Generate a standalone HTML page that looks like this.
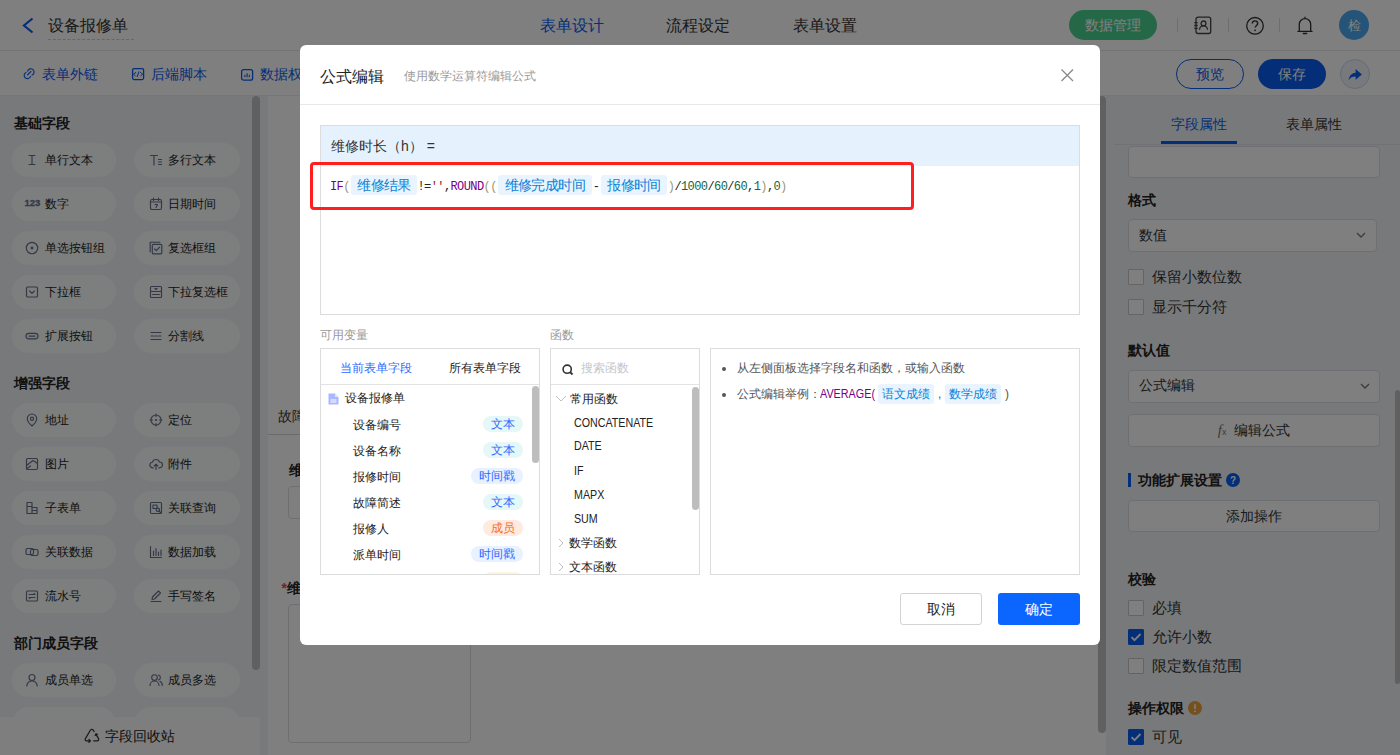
<!DOCTYPE html>
<html><head><meta charset="utf-8">
<style>
*{box-sizing:border-box;margin:0;padding:0}
html,body{width:1400px;height:755px;overflow:hidden;background:#fff}
body{position:relative;font-family:"Liberation Sans",sans-serif;color:#333;font-size:14px}
.a{position:absolute;white-space:nowrap}
.t{position:absolute;white-space:nowrap;line-height:20px}
svg{position:absolute;overflow:visible}
/* header */
#hdr{position:absolute;left:0;top:0;width:1400px;height:51px;background:#fff;border-bottom:1px solid #e6e6e6}
#tb{position:absolute;left:0;top:51px;width:1400px;height:45px;background:#fff;border-bottom:1px solid #ececec}
#left{position:absolute;left:0;top:96px;width:268px;height:659px;background:#f1f3f6}
#center{position:absolute;left:268px;top:96px;width:838px;height:659px;background:#fff}
#right{position:absolute;left:1106px;top:96px;width:294px;height:659px;background:#f1f3f6}
.pill{position:absolute;width:104px;height:34px;border-radius:17px;background:#fbfcfd}
.pill2{left:134px;width:106px}
.ptxt{position:absolute;font-size:12px;line-height:34px;color:#1c1c1c;white-space:nowrap}
.sec{position:absolute;left:14px;font-size:14px;font-weight:bold;line-height:20px;color:#222}
.lbl{position:absolute;font-size:14px;font-weight:bold;line-height:20px;color:#222;left:28px}
.box{position:absolute;border:1px solid #dcdfe6;border-radius:4px;background:#fff}
.cb{position:absolute;left:28px;width:16px;height:16px;border:1px solid #c8c8c8;background:#fff;border-radius:1px}
.cb.on{background:#0a5cf0;border-color:#0a5cf0}
.cbt{position:absolute;left:52px;font-size:14.5px;line-height:20px;color:#333}
#mask{position:absolute;left:0;top:0;width:1400px;height:755px;background:rgba(0,0,0,.5)}
#modal{position:absolute;left:300px;top:45px;width:800px;height:600px;background:#fff;border-radius:6px;overflow:hidden}
.tag{height:20px;top:0;border-radius:3px;background:#e9f4fe;color:#0a82d8;font-family:"Liberation Sans",sans-serif;font-size:14px;line-height:20px;text-align:center}
.vt{position:absolute;height:16px;border-radius:8px;font-size:12px;line-height:16px;text-align:center}
.fn{left:22.5px;font-size:12px;line-height:17px;color:#222;transform:scaleX(.89);transform-origin:0 0}
.tag2{position:absolute;height:20px;border-radius:3px;background:#e9f4fe;color:#0a82d8;font-size:12px;line-height:20px;text-align:center}
</style></head><body>

<div id="hdr">
  <svg width="12" height="16" style="left:22px;top:17px"><polyline points="10.5,1.5 2,8.5 10.5,15.5" fill="none" stroke="#0a5cf0" stroke-width="2.2"/></svg>
  <div class="t" style="left:48px;top:15px;font-size:16px;line-height:21px;color:#333">设备报修单</div>
  <div class="a" style="left:48px;top:39px;width:86px;border-top:1px dashed #cfcfcf"></div>
  <div class="t" style="left:540px;top:15px;font-size:16px;line-height:21px;color:#0a5cf0">表单设计</div>
  <div class="t" style="left:666px;top:15px;font-size:16px;line-height:21px;color:#333">流程设定</div>
  <div class="t" style="left:793px;top:15px;font-size:16px;line-height:21px;color:#333">表单设置</div>
  <div class="a" style="left:1069px;top:10px;width:88px;height:30px;border-radius:15px;background:#4bd090;color:#fff;font-size:14px;line-height:30px;text-align:center">数据管理</div>
  <div class="a" style="left:1177px;top:18px;width:1px;height:14px;background:#ddd"></div>
  <div class="a" style="left:1228px;top:18px;width:1px;height:14px;background:#ddd"></div>
  <div class="a" style="left:1279px;top:18px;width:1px;height:14px;background:#ddd"></div>
  <svg width="18" height="18" style="left:1193px;top:16px"><rect x="3" y="1.2" width="14.7" height="16.3" rx="2" stroke="#444" stroke-width="1.3" fill="none"/><path d="M1.3 6.6h3.4M1.3 9.5h3.4M1.3 12.4h3.4" stroke="#444" stroke-width="1.3"/><circle cx="10.5" cy="7.4" r="2.4" stroke="#444" stroke-width="1.3" fill="none"/><path d="M6.5 13.8a4 4 0 018 0" stroke="#444" stroke-width="1.3" fill="none"/></svg>
  <svg width="20" height="20" style="left:1245px;top:15.5px"><circle cx="10" cy="9.8" r="8.3" stroke="#333" stroke-width="1.3" fill="none"/><path d="M7.3 7.6a2.7 2.7 0 115.4 0c0 1.7-2.3 1.9-2.5 3.9" stroke="#333" stroke-width="1.4" fill="none"/><circle cx="10.1" cy="14.3" r="0.9" fill="#333"/></svg>
  <svg width="18" height="20" style="left:1296px;top:15px"><path d="M9 2.2v1.3M3.3 16.4V9.3a5.7 5.7 0 0111.4 0v7.1M2 16.4h14M7.3 18.5h3.4" stroke="#333" stroke-width="1.3" fill="none" stroke-linecap="round"/></svg>
  <div class="a" style="left:1339px;top:10px;width:30px;height:30px;border-radius:15px;background:#4aa8f0;color:#fff;font-size:13px;line-height:31px;text-align:center">检</div>
</div>

<div id="tb">
  <svg width="14" height="14" style="left:22px;top:15px"><path d="M5.6 5.1A3.3 3.3 0 1 1 10.1 9.1M8.6 10.4A3.3 3.3 0 1 1 4 6.4M5.5 8.9L8.9 5.5" stroke="#0a5cf0" stroke-width="1.15" fill="none" stroke-linecap="round"/></svg>
  <svg width="14" height="14" style="left:131px;top:16px"><rect x="1.6" y="1.6" width="11" height="11" rx="1.5" stroke="#0a5cf0" stroke-width="1.3" fill="none"/><path d="M5 5.2L2.6 7.2 4.6 9M9.2 5.2l2.4 2-2 1.8M8.1 4.4L6 10" stroke="#0a5cf0" stroke-width="1" fill="none"/></svg>
  <svg width="14" height="14" style="left:240px;top:17px"><rect x="1.6" y="1.6" width="11" height="10.6" rx="2" stroke="#0a5cf0" stroke-width="1.3" fill="none"/><path d="M4.9 6.8v2.5M7.1 5.3v4M9.3 6.8v2.5" stroke="#0a5cf0" stroke-width="1.1" fill="none"/></svg>
  <div class="t" style="left:42px;top:13px;font-size:14px;color:#0a5cf0">表单外链</div>
  <div class="t" style="left:151px;top:13px;font-size:14px;color:#0a5cf0">后端脚本</div>
  <div class="t" style="left:260px;top:13px;font-size:14px;color:#0a5cf0">数据权限</div>
  <div class="a" style="left:1176px;top:8px;width:68px;height:30px;border-radius:15px;border:1px solid #0a5cf0;color:#0a5cf0;font-size:14px;line-height:28px;text-align:center">预览</div>
  <div class="a" style="left:1258px;top:8px;width:68px;height:30px;border-radius:15px;background:#0a5cf0;color:#fff;font-size:14px;line-height:30px;text-align:center">保存</div>
  <div class="a" style="left:1340px;top:8px;width:30px;height:30px;border-radius:15px;background:#eef3fb;border:1px solid #c9d6ee"><svg width="16" height="14" style="left:7px;top:8px"><path d="M0.6 12.5C1.2 7.4 4.2 5 7.6 4.8V1l6.3 5.4-6.3 5.3V8.6c-3.2 0-5.3.9-7 3.9z" fill="#0a5cf0"/></svg></div>
</div>

<div id="left">
<div class="sec" style="top:16.6px">基础字段</div>
<div class="sec" style="top:276.8px">增强字段</div>
<div class="sec" style="top:537.0px">部门成员字段</div>
<div class="pill" style="left:12px;top:47px"></div><svg width="14" height="14" style="left:25px;top:57px"><path d="M4 2.5h6M7 2.5v9M4 11.5h6" stroke="#66708a" stroke-width="1.15" fill="none" stroke-linecap="round" stroke-linejoin="round"/></svg><div class="ptxt" style="left:45px;top:47px">单行文本</div>
<div class="pill pill2" style="top:47px"></div><svg width="14" height="14" style="left:149px;top:57px"><path d="M1.5 2.5h7M5 2.5v9.5M9.5 6.5h3M9.5 9h3M9.5 11.5h3" stroke="#66708a" stroke-width="1.15" fill="none" stroke-linecap="round" stroke-linejoin="round"/></svg><div class="ptxt" style="left:168px;top:47px">多行文本</div>
<div class="pill" style="left:12px;top:91px"></div><div class="a" style="left:24.5px;top:102.4px;font-size:9.5px;line-height:10px;font-weight:bold;color:#6a7390;-webkit-text-stroke:.3px #6a7390">123</div><div class="ptxt" style="left:45px;top:91px">数字</div>
<div class="pill pill2" style="top:91px"></div><svg width="14" height="14" style="left:149px;top:101px"><rect x="1.5" y="2.5" width="11" height="10" rx="1.5" stroke="#66708a" stroke-width="1.15" fill="none" stroke-linecap="round" stroke-linejoin="round"/><path d="M4.5 1v2.5M9.5 1v2.5M1.5 5h11M6 7.5h2.5l-1.5 3" stroke="#66708a" stroke-width="1.15" fill="none" stroke-linecap="round" stroke-linejoin="round"/></svg><div class="ptxt" style="left:168px;top:91px">日期时间</div>
<div class="pill" style="left:12px;top:135px"></div><svg width="14" height="14" style="left:25px;top:145px"><circle cx="7" cy="7" r="5.7" stroke="#66708a" stroke-width="1.15" fill="none" stroke-linecap="round" stroke-linejoin="round"/><circle cx="7" cy="7" r="1.4" fill="#66708a"/></svg><div class="ptxt" style="left:45px;top:135px">单选按钮组</div>
<div class="pill pill2" style="top:135px"></div><svg width="14" height="14" style="left:149px;top:145px"><path d="M1.2 10.8V1.2h9.6" stroke="#66708a" stroke-width="1.15" fill="none" stroke-linecap="round" stroke-linejoin="round"/><rect x="3.3" y="3.3" width="9.5" height="9.5" rx="1" stroke="#66708a" stroke-width="1.15" fill="none" stroke-linecap="round" stroke-linejoin="round"/><path d="M5.6 8l1.7 1.7 3.3-3.5" stroke="#66708a" stroke-width="1.15" fill="none" stroke-linecap="round" stroke-linejoin="round"/></svg><div class="ptxt" style="left:168px;top:135px">复选框组</div>
<div class="pill" style="left:12px;top:179px"></div><svg width="14" height="14" style="left:25px;top:189px"><rect x="1.5" y="2" width="11" height="10" rx="1" stroke="#66708a" stroke-width="1.15" fill="none" stroke-linecap="round" stroke-linejoin="round"/><path d="M4.6 6l2.4 2.3 2.4-2.3" stroke="#66708a" stroke-width="1.15" fill="none" stroke-linecap="round" stroke-linejoin="round"/></svg><div class="ptxt" style="left:45px;top:179px">下拉框</div>
<div class="pill pill2" style="top:179px"></div><svg width="14" height="14" style="left:149px;top:189px"><rect x="1.5" y="1.5" width="11" height="5" rx="1" stroke="#66708a" stroke-width="1.15" fill="none" stroke-linecap="round" stroke-linejoin="round"/><path d="M1.5 6.5v5a1 1 0 001 1h9a1 1 0 001-1v-5M6 3.5l1 1 1-1M3.5 9.5h7" stroke="#66708a" stroke-width="1.15" fill="none" stroke-linecap="round" stroke-linejoin="round"/></svg><div class="ptxt" style="left:168px;top:179px">下拉复选框</div>
<div class="pill" style="left:12px;top:223px"></div><svg width="14" height="14" style="left:25px;top:233px"><rect x="1" y="4.3" width="12" height="5.6" rx="2.8" stroke="#66708a" stroke-width="1.15" fill="none" stroke-linecap="round" stroke-linejoin="round"/><path d="M4 7.1h6" stroke="#66708a" stroke-width="1.15" fill="none" stroke-linecap="round" stroke-linejoin="round"/></svg><div class="ptxt" style="left:45px;top:223px">扩展按钮</div>
<div class="pill pill2" style="top:223px"></div><svg width="14" height="14" style="left:149px;top:233px"><path d="M2 3.5h10M2 7h2.5M5.8 7h2.4M9.5 7H12M2 10.5h10" stroke="#66708a" stroke-width="1.15" fill="none" stroke-linecap="round" stroke-linejoin="round"/></svg><div class="ptxt" style="left:168px;top:223px">分割线</div>
<div class="pill" style="left:12px;top:307px"></div><svg width="14" height="14" style="left:25px;top:317px"><path d="M7 13S2.3 8.8 2.3 5.7a4.7 4.7 0 019.4 0C11.7 8.8 7 13 7 13z" stroke="#66708a" stroke-width="1.15" fill="none" stroke-linecap="round" stroke-linejoin="round"/><circle cx="7" cy="5.7" r="1.6" stroke="#66708a" stroke-width="1.15" fill="none" stroke-linecap="round" stroke-linejoin="round"/></svg><div class="ptxt" style="left:45px;top:307px">地址</div>
<div class="pill pill2" style="top:307px"></div><svg width="14" height="14" style="left:149px;top:317px"><circle cx="7" cy="7" r="5" stroke="#66708a" stroke-width="1.15" fill="none" stroke-linecap="round" stroke-linejoin="round"/><path d="M7 1v2.5M7 10.5V13M1 7h2.5M10.5 7H13" stroke="#66708a" stroke-width="1.15" fill="none" stroke-linecap="round" stroke-linejoin="round"/><circle cx="7" cy="7" r="1.1" fill="#66708a"/></svg><div class="ptxt" style="left:168px;top:307px">定位</div>
<div class="pill" style="left:12px;top:351px"></div><svg width="14" height="14" style="left:25px;top:361px"><rect x="1.5" y="1.5" width="11" height="11" rx="1.2" stroke="#66708a" stroke-width="1.15" fill="none" stroke-linecap="round" stroke-linejoin="round"/><path d="M1.5 8.5L8 3.5l4.5 3M1.5 12l4-3" stroke="#66708a" stroke-width="1.15" fill="none" stroke-linecap="round" stroke-linejoin="round"/></svg><div class="ptxt" style="left:45px;top:351px">图片</div>
<div class="pill pill2" style="top:351px"></div><svg width="14" height="14" style="left:149px;top:361px"><path d="M4.2 10.8H3.8a2.8 2.8 0 01-.3-5.6A3.6 3.6 0 0110.4 5a2.9 2.9 0 01.3 5.8h-.9M7 7.2v5.3M5.2 9l1.8-1.8L8.8 9" stroke="#66708a" stroke-width="1.15" fill="none" stroke-linecap="round" stroke-linejoin="round"/></svg><div class="ptxt" style="left:168px;top:351px">附件</div>
<div class="pill" style="left:12px;top:395px"></div><svg width="14" height="14" style="left:25px;top:405px"><path d="M2 1.5h5v11H2zM7 6.5h5v6H7zM2 5.5h5M7 9.5h5" stroke="#66708a" stroke-width="1.15" fill="none" stroke-linecap="round" stroke-linejoin="round"/></svg><div class="ptxt" style="left:45px;top:395px">子表单</div>
<div class="pill pill2" style="top:395px"></div><svg width="14" height="14" style="left:149px;top:405px"><rect x="1.5" y="1.5" width="11" height="11" rx="1" stroke="#66708a" stroke-width="1.15" fill="none" stroke-linecap="round" stroke-linejoin="round"/><path d="M4 4h4v3.5H4z" stroke="#66708a" stroke-width="1.15" fill="none" stroke-linecap="round" stroke-linejoin="round"/><circle cx="8.8" cy="8.8" r="1.7" stroke="#66708a" stroke-width="1.15" fill="none" stroke-linecap="round" stroke-linejoin="round"/><path d="M10 10l1.5 1.5" stroke="#66708a" stroke-width="1.15" fill="none" stroke-linecap="round" stroke-linejoin="round"/></svg><div class="ptxt" style="left:168px;top:395px">关联查询</div>
<div class="pill" style="left:12px;top:439px"></div><svg width="14" height="14" style="left:25px;top:449px"><rect x="1" y="3.5" width="7.5" height="6" rx="1.5" stroke="#66708a" stroke-width="1.15" fill="none" stroke-linecap="round" stroke-linejoin="round"/><rect x="5.5" y="4.5" width="7.5" height="6" rx="1.5" stroke="#66708a" stroke-width="1.15" fill="none" stroke-linecap="round" stroke-linejoin="round"/></svg><div class="ptxt" style="left:45px;top:439px">关联数据</div>
<div class="pill pill2" style="top:439px"></div><svg width="14" height="14" style="left:149px;top:449px"><path d="M1.5 1.5v11h11M4.5 6v4.5M7 3.5v7M9.5 7v3.5M12 5v5.5" stroke="#66708a" stroke-width="1.15" fill="none" stroke-linecap="round" stroke-linejoin="round"/></svg><div class="ptxt" style="left:168px;top:439px">数据加载</div>
<div class="pill" style="left:12px;top:483px"></div><svg width="14" height="14" style="left:25px;top:493px"><rect x="1.5" y="2" width="11" height="10" rx="1" stroke="#66708a" stroke-width="1.15" fill="none" stroke-linecap="round" stroke-linejoin="round"/><path d="M4 5.5h6l-1-1M10 8.5H4l1 1" stroke="#66708a" stroke-width="1.15" fill="none" stroke-linecap="round" stroke-linejoin="round"/></svg><div class="ptxt" style="left:45px;top:483px">流水号</div>
<div class="pill pill2" style="top:483px"></div><svg width="14" height="14" style="left:149px;top:493px"><path d="M2 12.5h10M3 10.5l.5-2.5L9.5 2l2 2-6 6z" stroke="#66708a" stroke-width="1.15" fill="none" stroke-linecap="round" stroke-linejoin="round"/></svg><div class="ptxt" style="left:168px;top:483px">手写签名</div>
<div class="pill" style="left:12px;top:567px"></div><svg width="14" height="14" style="left:25px;top:577px"><circle cx="7" cy="4.5" r="3" stroke="#66708a" stroke-width="1.15" fill="none" stroke-linecap="round" stroke-linejoin="round"/><path d="M1.8 13a5.2 5.2 0 0110.4 0" stroke="#66708a" stroke-width="1.15" fill="none" stroke-linecap="round" stroke-linejoin="round"/></svg><div class="ptxt" style="left:45px;top:567px">成员单选</div>
<div class="pill pill2" style="top:567px"></div><svg width="14" height="14" style="left:149px;top:577px"><circle cx="5.5" cy="4.5" r="2.8" stroke="#66708a" stroke-width="1.15" fill="none" stroke-linecap="round" stroke-linejoin="round"/><path d="M1 12.5a4.5 4.5 0 019 0M9.5 2a2.6 2.6 0 010 5M11 8.2a4.2 4.2 0 012.2 4.3" stroke="#66708a" stroke-width="1.15" fill="none" stroke-linecap="round" stroke-linejoin="round"/></svg><div class="ptxt" style="left:168px;top:567px">成员多选</div>
<div class="pill" style="left:12px;top:611px"></div><svg width="14" height="14" style="left:25px;top:621px"><circle cx="7" cy="4.5" r="3" stroke="#66708a" stroke-width="1.15" fill="none" stroke-linecap="round" stroke-linejoin="round"/><path d="M1.8 13a5.2 5.2 0 0110.4 0" stroke="#66708a" stroke-width="1.15" fill="none" stroke-linecap="round" stroke-linejoin="round"/></svg><div class="ptxt" style="left:45px;top:611px">部门单选</div>
<div class="pill pill2" style="top:611px"></div><svg width="14" height="14" style="left:149px;top:621px"><circle cx="5.5" cy="4.5" r="2.8" stroke="#66708a" stroke-width="1.15" fill="none" stroke-linecap="round" stroke-linejoin="round"/><path d="M1 12.5a4.5 4.5 0 019 0M9.5 2a2.6 2.6 0 010 5M11 8.2a4.2 4.2 0 012.2 4.3" stroke="#66708a" stroke-width="1.15" fill="none" stroke-linecap="round" stroke-linejoin="round"/></svg><div class="ptxt" style="left:168px;top:611px">部门多选</div>
<div class="a" style="left:252px;top:0;width:8px;height:574px;border-radius:4px;background:#c1c1c1"></div>
<div class="a" style="left:0;top:621px;width:260px;height:38px;background:#fcfcfd"></div>
<svg width="16" height="15" style="left:84px;top:632px"><path d="M6.6 1.8L1.4 10.6c-.6 1.1 0 2.3 1.2 2.3H6M4.9 11.3L6.5 12.9 4.9 14.3M9.8 12.9h3.4c1.2 0 1.9-1.2 1.3-2.3l-2.6-4.5M13.3 6.4l-1.4-.6-.7 1.7M10.1 3.6L9.2 2c-.6-1-1.8-1-2.5 0" stroke="#333" stroke-width="1.2" fill="none" stroke-linecap="round" stroke-linejoin="round"/></svg>
<div class="t" style="left:105px;top:630px;font-size:14px;color:#222">字段回收站</div>
</div>
<div id="center">
<div class="t" style="left:10px;top:309.7px;font-size:14px;color:#333">故障简述</div>
<div class="a" style="left:0;top:338px;width:838px;height:1px;background:#d6d6d6"></div>
<div class="t" style="left:21px;top:364.4px;font-size:14px;font-weight:bold;color:#222">维修结果</div>
<div class="box" style="left:20px;top:390px;width:400px;height:33px"></div>
<div class="t" style="left:13.5px;top:481.5px;font-size:14px;font-weight:bold;color:#222"><span style="color:#f04040">*</span>维修完成时间</div>
<div class="box" style="left:20px;top:508px;width:183px;height:139px"></div>
</div>
<div id="right">
<div class="t" style="left:65px;top:18px;font-size:14px;color:#0a5cf0">字段属性</div>
<div class="t" style="left:180px;top:18px;font-size:14px;color:#333">表单属性</div>
<div class="a" style="left:8px;top:48px;width:286px;height:1px;background:#e3e5e8"></div>
<div class="a" style="left:55px;top:45px;width:76px;height:3px;background:#0a5cf0"></div>
<div class="box" style="left:22px;top:50px;width:252px;height:32px"></div>
<div class="a" style="left:8px;top:49px;width:286px;height:0"></div>
<div class="lbl" style="left:22px;top:93.6px">格式</div>
<div class="box" style="left:22px;top:122.6px;width:249px;height:33px"></div>
<div class="t" style="left:33px;top:129px;font-size:14px;color:#333">数值</div>
<svg width="10" height="6" style="left:250px;top:136px"><path d="M1 1l4 4 4-4" stroke="#777" stroke-width="1.3" fill="none"/></svg>
<div class="cb" style="left:22px;top:173px"></div><div class="cbt" style="left:46px;top:170.7px">保留小数位数</div>
<div class="cb" style="left:22px;top:203px"></div><div class="cbt" style="left:46px;top:200.8px">显示千分符</div>
<div class="lbl" style="left:22px;top:244px">默认值</div>
<div class="box" style="left:22px;top:273.5px;width:252px;height:33px"></div>
<div class="t" style="left:33px;top:279px;font-size:14px;color:#333">公式编辑</div>
<svg width="10" height="6" style="left:254px;top:287px"><path d="M1 1l4 4 4-4" stroke="#777" stroke-width="1.3" fill="none"/></svg>
<div class="box" style="left:22px;top:317.6px;width:252px;height:33px;text-align:center;font-size:14px;line-height:31px;color:#333"><i style="font-family:'Liberation Serif',serif;color:#777;font-size:15px">f</i><span style="font-size:9px;color:#777;font-family:'Liberation Sans'">x</span>&nbsp; 编辑公式</div>
<div class="a" style="left:22px;top:377px;width:3px;height:14px;background:#0a5cf0"></div>
<div class="lbl" style="left:31.6px;top:374px">功能扩展设置</div>
<svg width="14" height="14" style="left:120px;top:377px"><circle cx="7" cy="7" r="7" fill="#0a5cf0"/><text x="7" y="11" text-anchor="middle" font-family="Liberation Sans" font-weight="bold" font-size="10" fill="#fff">?</text></svg>
<div class="box" style="left:22px;top:403.7px;width:252px;height:32.5px;text-align:center;font-size:14px;line-height:30px;color:#333">添加操作</div>
<div class="lbl" style="left:22px;top:473px">校验</div>
<div class="cb" style="left:22px;top:503.8px"></div><div class="cbt" style="left:46px;top:501.8px">必填</div>
<div class="cb on" style="left:22px;top:532.9px"><svg width="16" height="16" style="left:-1px;top:-1px"><path d="M3.5 8.2l3 3 6-6.2" stroke="#fff" stroke-width="1.8" fill="none"/></svg></div><div class="cbt" style="left:46px;top:530.9px">允许小数</div>
<div class="cb" style="left:22px;top:561.9px"></div><div class="cbt" style="left:46px;top:559.9px">限定数值范围</div>
<div class="lbl" style="left:22px;top:602px">操作权限</div>
<svg width="14" height="14" style="left:82.4px;top:605px"><circle cx="7" cy="7" r="7" fill="#e8a33d"/><path d="M7 3.3v4.6" stroke="#fff" stroke-width="1.6"/><circle cx="7" cy="10.2" r="0.9" fill="#fff"/></svg>
<div class="cb on" style="left:22px;top:632.6px"><svg width="16" height="16" style="left:-1px;top:-1px"><path d="M3.5 8.2l3 3 6-6.2" stroke="#fff" stroke-width="1.8" fill="none"/></svg></div><div class="cbt" style="left:46px;top:630.6px">可见</div>
<div class="a" style="left:289px;top:294px;width:5px;height:294px;border-radius:3px;background:#c1c1c1"></div>
</div>
<div class="a" style="left:1098px;top:96px;width:8px;height:637px;border-radius:4px;background:#c1c1c1"></div>

<div id="mask"></div>

<div id="modal">
<div class="t" style="left:20px;top:20.5px;font-size:16px;line-height:21px;color:#222">公式编辑</div>
<div class="t" style="left:104px;top:23px;font-size:12px;line-height:17px;color:#9a9a9a">使用数学运算符编辑公式</div>
<svg width="14" height="14" style="left:760px;top:23px"><path d="M1.5 1.5l11.5 11.5M13 1.5l-11.5 11.5" stroke="#888" stroke-width="1.25"/></svg>
<div class="a" style="left:0;top:59px;width:800px;height:1px;background:#e8e8e8"></div>

<div class="a" style="left:20px;top:80px;width:760px;height:190px;border:1px solid #dcdcdc;background:#fff"></div>
<div class="a" style="left:21px;top:81px;width:758px;height:40px;background:#e5f2fd"></div>
<div class="t" style="left:31px;top:91px;font-size:14px;color:#333">维修时长（h） =</div>

<div id="fx" class="a" style="left:0;top:130px;height:20px;font-family:'Liberation Mono',monospace;font-size:12px;letter-spacing:-0.6px;line-height:20px">
<span class="a" style="left:30px;color:#770088;top:2px">IF<span style="color:#999977">(</span></span>
<span class="a tag" style="left:51.2px;width:65.6px">维修结果</span>
<span class="a" style="left:117.5px;color:#222;top:2px">!=<span style="color:#aa1111">''</span>,<span style="color:#770088">ROUND</span><span style="color:#999977">((</span></span>
<span class="a tag" style="left:197.9px;width:93.8px">维修完成时间</span>
<span class="a" style="left:292.8px;color:#222;top:2px">-</span>
<span class="a tag" style="left:301.4px;width:65.4px">报修时间</span>
<span class="a" style="left:367.8px;color:#222;top:2px"><span style="color:#999977">)</span>/<span style="color:#116644">1000</span>/<span style="color:#116644">60</span>/<span style="color:#116644">60</span>,<span style="color:#116644">1</span><span style="color:#999977">)</span>,<span style="color:#116644">0</span><span style="color:#999977">)</span></span>
</div>
<div class="a" style="left:10px;top:117px;width:604px;height:48px;border:3px solid #ff1f1f;border-radius:4px"></div>

<div class="t" style="left:20px;top:281.5px;font-size:12px;line-height:17px;color:#999">可用变量</div>
<div class="t" style="left:250px;top:281.5px;font-size:12px;line-height:17px;color:#999">函数</div>

<div class="a" style="left:20px;top:303px;width:220px;height:227px;border:1px solid #dcdcdc;overflow:hidden">
  <div class="t" style="left:19px;top:11px;font-size:12px;line-height:17px;color:#2f6bff">当前表单字段</div>
  <div class="t" style="left:127.5px;top:11px;font-size:12px;line-height:17px;color:#222">所有表单字段</div>
  <div class="a" style="left:0;top:35px;width:220px;height:1px;background:#e3e3e3"></div>
  <svg width="11" height="12" style="left:7px;top:44px"><path d="M0.5 0.5h6.5l3.5 3.5v7.5h-10z" fill="#a9b7ff"/><path d="M2.5 7h6M2.5 9h6" stroke="#fff" stroke-width="1"/><path d="M7 .5v3.5h3.5" fill="#dde3ff"/></svg>
  <div class="t" style="left:23.5px;top:41px;font-size:12px;line-height:17px;color:#222">设备报修单</div>
  <div class="t" style="left:31.5px;top:67.5px;font-size:12px;line-height:17px;color:#222">设备编号</div>
  <div class="vt" style="top:66.5px;left:162px;width:40px;background:#e5f7f7;color:#2f6bff">文本</div>
  <div class="t" style="left:31.5px;top:93.5px;font-size:12px;line-height:17px;color:#222">设备名称</div>
  <div class="vt" style="top:92.5px;left:162px;width:40px;background:#e5f7f7;color:#2f6bff">文本</div>
  <div class="t" style="left:31.5px;top:119.5px;font-size:12px;line-height:17px;color:#222">报修时间</div>
  <div class="vt" style="top:118.5px;left:150px;width:52px;background:#e8f1ff;color:#2f6bff">时间戳</div>
  <div class="t" style="left:31.5px;top:145.5px;font-size:12px;line-height:17px;color:#222">故障简述</div>
  <div class="vt" style="top:144.5px;left:162px;width:40px;background:#e5f7f7;color:#2f6bff">文本</div>
  <div class="t" style="left:31.5px;top:171.5px;font-size:12px;line-height:17px;color:#222">报修人</div>
  <div class="vt" style="top:170.5px;left:162px;width:40px;background:#ffeadf;color:#f0701f">成员</div>
  <div class="t" style="left:31.5px;top:197.5px;font-size:12px;line-height:17px;color:#222">派单时间</div>
  <div class="vt" style="top:196.5px;left:150px;width:52px;background:#e8f1ff;color:#2f6bff">时间戳</div>
  <div class="vt" style="top:222.5px;left:162px;width:40px;background:#fff4dc;color:#f0a01f">数值</div>
  <div class="a" style="left:211px;top:37px;width:7px;height:77px;border-radius:4px;background:#bdbdbd"></div>
</div>

<div class="a" style="left:250px;top:303px;width:150px;height:227px;border:1px solid #dcdcdc;overflow:hidden">
  <svg width="12" height="12" style="left:11px;top:15px"><circle cx="5.2" cy="5.2" r="4.1" stroke="#333" stroke-width="1.6" fill="none"/><path d="M8 8l2.5 2.5" stroke="#333" stroke-width="1.8"/></svg>
  <div class="t" style="left:30px;top:10.5px;font-size:12px;line-height:17px;color:#c4c6cc">搜索函数</div>
  <div class="a" style="left:0;top:35px;width:150px;height:1px;background:#e3e3e3"></div>
  <svg width="12" height="8" style="left:4px;top:46px"><path d="M1 1l5 5 5-5" stroke="#c0c0c0" stroke-width="1" fill="none"/></svg>
  <div class="t" style="left:18.5px;top:41.5px;font-size:12px;line-height:17px;color:#222">常用函数</div>
  <div class="t fn" style="top:65.5px">CONCATENATE</div>
  <div class="t fn" style="top:89px">DATE</div>
  <div class="t fn" style="top:113.5px">IF</div>
  <div class="t fn" style="top:137.5px">MAPX</div>
  <div class="t fn" style="top:161.5px">SUM</div>
  <svg width="6" height="10" style="left:7px;top:189px"><path d="M1 1l4 4-4 4" stroke="#c0c0c0" stroke-width="1" fill="none"/></svg>
  <div class="t" style="left:18px;top:185.5px;font-size:12px;line-height:17px;color:#222">数学函数</div>
  <svg width="6" height="10" style="left:7px;top:213px"><path d="M1 1l4 4-4 4" stroke="#c0c0c0" stroke-width="1" fill="none"/></svg>
  <div class="t" style="left:18px;top:209.5px;font-size:12px;line-height:17px;color:#222">文本函数</div>
  <div class="a" style="left:141px;top:38px;width:7px;height:123px;border-radius:4px;background:#bdbdbd"></div>
</div>

<div class="a" style="left:410px;top:303px;width:370px;height:227px;border:1px solid #dcdcdc">
  <div class="a" style="left:11px;top:17.5px;width:4px;height:4px;border-radius:2px;background:#555"></div>
  <div class="t" style="left:25.5px;top:11px;font-size:12px;line-height:17px;color:#555">从左侧面板选择字段名和函数，或输入函数</div>
  <div class="a" style="left:11px;top:43.5px;width:4px;height:4px;border-radius:2px;background:#555"></div>
  <div class="t" style="left:25.5px;top:37px;font-size:12px;line-height:17px;color:#555">公式编辑举例：</div><div class="t" style="left:108.5px;top:37px;font-size:12px;line-height:17px;color:#770088;transform:scaleX(.9);transform-origin:0 0">AVERAGE(</div>
  <div class="tag2" style="left:166.5px;top:35px;width:56px">语文成绩</div>
  <div class="t" style="left:227px;top:37px;font-size:12px;line-height:17px;color:#555">,</div>
  <div class="tag2" style="left:233.5px;top:35px;width:56px">数学成绩</div>
  <div class="t" style="left:294px;top:37px;font-size:12px;line-height:17px;color:#555">)</div>
</div>

<div class="a" style="left:600px;top:548px;width:82px;height:32px;border:1px solid #d3d3d3;border-radius:3px;font-size:14px;line-height:30px;text-align:center;color:#222">取消</div>
<div class="a" style="left:698px;top:548px;width:82px;height:32px;border-radius:3px;background:#0a66ff;font-size:14px;line-height:32px;text-align:center;color:#fff">确定</div>
</div>


</body></html>
